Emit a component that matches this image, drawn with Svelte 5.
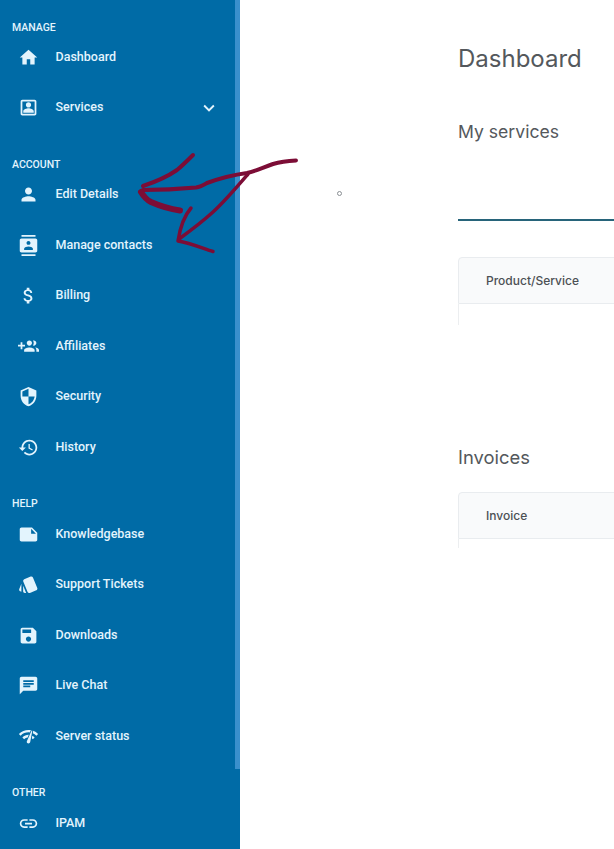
<script>
  const icons = {
    home: 'M10 20v-6h4v6h5v-8h3L12 3 2 12h3v8z',
    services: 'M19 5v14H5V5h14m0-2H5c-1.11 0-2 .9-2 2v14c0 1.1.89 2 2 2h14c1.1 0 2-.9 2-2V5c0-1.1-.9-2-2-2zm-7 9c1.65 0 3-1.35 3-3s-1.35-3-3-3-3 1.35-3 3 1.35 3 3 3zm-6 6h12v-1.53c0-2.5-3.97-3.58-6-3.58s-6 1.08-6 3.58V18z',
    person: 'M12 12c2.21 0 4-1.79 4-4s-1.79-4-4-4-4 1.79-4 4 1.79 4 4 4zm0 2c-2.67 0-8 1.34-8 4v2h16v-2c0-2.66-5.33-4-8-4z',
    contacts: 'M20 0H4v2h16V0zM4 24h16v-2H4v2zM20 4H4c-1.1 0-2 .9-2 2v12c0 1.1.9 2 2 2h16c1.1 0 2-.9 2-2V6c0-1.1-.9-2-2-2zm-8 2.75c1.24 0 2.25 1.01 2.25 2.25s-1.01 2.25-2.25 2.25S9.75 10.24 9.75 9 10.76 6.75 12 6.75zM17 17H7v-1.5c0-1.67 3.33-2.5 5-2.5s5 .83 5 2.5V17z',
    money: 'M11.8 10.9c-2.27-.59-3-1.2-3-2.15 0-1.09 1.01-1.85 2.7-1.85 1.78 0 2.44.85 2.5 2.1h2.21c-.07-1.72-1.12-3.3-3.21-3.81V3h-3v2.16c-1.94.42-3.5 1.68-3.5 3.61 0 2.31 1.91 3.46 4.7 4.13 2.5.6 3 1.48 3 2.41 0 .69-.49 1.79-2.7 1.79-2.06 0-2.87-.92-2.98-2.1h-2.2c.12 2.19 1.76 3.42 3.68 3.83V21h3v-2.15c1.95-.37 3.5-1.5 3.5-3.55 0-2.84-2.43-3.81-4.7-4.4z',
    groupAdd: 'M8 10H5V7H3v3H0v2h3v3h2v-3h3v-2zm10 1c1.66 0 2.99-1.34 2.99-3S19.66 5 18 5c-.32 0-.63.05-.91.14.57.81.9 1.79.9 2.86s-.34 2.04-.9 2.86c.28.09.59.14.91.14zm-5 0c1.66 0 2.99-1.34 2.99-3S14.66 5 13 5s-3 1.34-3 3 1.34 3 3 3zm6.62 2.16c.83.73 1.38 1.66 1.38 2.84v2h3v-2c0-1.54-2.37-2.49-4.38-2.84zM13 13c-2 0-6 1-6 3v2h12v-2c0-2-4-3-6-3z',
    security: 'M12 1L3 5v6c0 5.55 3.84 10.74 9 12 5.16-1.26 9-6.45 9-12V5l-9-4zm0 10.99h7c-.53 4.12-3.28 7.79-7 8.94V12H5V6.3l7-3.11v8.8z',
    history: 'M13 3c-4.97 0-9 4.03-9 9H1l3.89 3.89.07.14L9 12H6c0-3.87 3.13-7 7-7s7 3.13 7 7-3.13 7-7 7c-1.93 0-3.68-.79-4.94-2.06l-1.42 1.42C8.27 19.99 10.51 21 13 21c4.97 0 9-4.03 9-9s-4.03-9-9-9zm-1 5v5l4.28 2.54.72-1.21-3.5-2.08V8H12z',
    note: 'M22 10l-6-6H4c-1.1 0-2 .9-2 2v12.01c0 1.1.9 1.99 2 1.99l16-.01c1.1 0 2-.89 2-1.99v-8zm-7-4.5l5.5 5.5H15V5.5z',
    tickets: 'M2.53 19.65l1.34.56v-9.03l-2.43 5.86c-.41 1.02.08 2.19 1.09 2.61zm19.5-3.7L17.07 3.98c-.31-.75-1.04-1.21-1.81-1.23-.26 0-.53.04-.79.15L7.1 5.95c-.75.31-1.21 1.03-1.23 1.8-.01.27.04.54.15.8l4.96 11.97c.31.76 1.05 1.22 1.83 1.23.26 0 .52-.05.77-.15l7.36-3.05c1.02-.42 1.51-1.59 1.09-2.6zM5.88 19.75c0 1.1.9 2 2 2h1.45l-3.45-8.34v6.34z',
    save: 'M17 3H5c-1.11 0-2 .9-2 2v14c0 1.1.89 2 2 2h14c1.1 0 2-.9 2-2V7l-4-4zm-5 16c-1.66 0-3-1.34-3-3s1.34-3 3-3 3 1.34 3 3-1.34 3-3 3zm3-10H5V5h10v4z',
    chat: 'M20 2H4c-1.1 0-1.99.9-1.99 2L2 22l4-4h14c1.1 0 2-.9 2-2V4c0-1.1-.9-2-2-2zM6 9h12v2H6V9zm8 5H6v-2h8v2zm4-6H6V6h12v2z',
    network: 'M15.9 5c-.17 0-.32.09-.41.23l-.07.15-5.18 11.65c-.16.29-.26.61-.26.96 0 1.11.9 2.01 2.01 2.01.96 0 1.77-.68 1.96-1.59l.01-.03L16.4 5.5c0-.28-.22-.5-.5-.5zM1 9l2 2c2.88-2.88 6.79-4.08 10.53-3.62l1.19-2.68C9.89 3.84 4.74 5.27 1 9zm20 2l2-2c-1.64-1.64-3.55-2.82-5.59-3.57l-.53 2.82c1.5.62 2.9 1.53 4.12 2.75zm-4 4l2-2c-.8-.8-1.7-1.42-2.66-1.89l-.55 2.92c.42.27.83.59 1.21.97zM5 13l2 2c1.13-1.13 2.56-1.79 4.03-2l1.28-2.88c-2.63-.08-5.3.87-7.31 2.88z',
    link: 'M3.9 12c0-1.71 1.39-3.1 3.1-3.1h4V7H7c-2.76 0-5 2.24-5 5s2.24 5 5 5h4v-1.9H7c-1.71 0-3.1-1.39-3.1-3.1zM8 13h8v-2H8v2zm9-6h-4v1.9h4c1.71 0 3.1 1.39 3.1 3.1s-1.39 3.1-3.1 3.1h-4V17h4c2.76 0 5-2.24 5-5s-2.24-5-5-5z',
    expand: 'M16.59 8.59L12 13.17 7.41 8.59 6 10l6 6 6-6z'
  };

  const sections = [
    {
      title: 'MANAGE',
      items: [
        { label: 'Dashboard', icon: 'home' },
        { label: 'Services', icon: 'services', more: true }
      ]
    },
    {
      title: 'ACCOUNT',
      items: [
        { label: 'Edit Details', icon: 'person' },
        { label: 'Manage contacts', icon: 'contacts' },
        { label: 'Billing', icon: 'money' },
        { label: 'Affiliates', icon: 'groupAdd' },
        { label: 'Security', icon: 'security' },
        { label: 'History', icon: 'history' }
      ]
    },
    {
      title: 'HELP',
      items: [
        { label: 'Knowledgebase', icon: 'note' },
        { label: 'Support Tickets', icon: 'tickets' },
        { label: 'Downloads', icon: 'save' },
        { label: 'Live Chat', icon: 'chat' },
        { label: 'Server status', icon: 'network' }
      ]
    },
    {
      title: 'OTHER',
      items: [{ label: 'IPAM', icon: 'link' }]
    }
  ];
</script>

<div class="page">
  <aside class="sidebar">
    {#each sections as section}
      <section class="group">
        <h4>{section.title}</h4>
        <ul>
          {#each section.items as item}
            <li>
              <svg class="icon" viewBox="0 0 24 24"><path d={icons[item.icon]} /></svg>
              <span>{item.label}</span>
              {#if item.more}
                <svg class="chevron" viewBox="0 0 24 24"><path d={icons.expand} /></svg>
              {/if}
            </li>
          {/each}
        </ul>
      </section>
    {/each}
    <div class="scrollbar"></div>
  </aside>

  <main>
    <h1>Dashboard</h1>
    <h2>My services</h2>
    <div class="tabline"></div>
    <div class="table first">
      <div class="thead">Product/Service</div>
      <div class="tbody"></div>
    </div>
    <h2 class="invoices">Invoices</h2>
    <div class="table">
      <div class="thead">Invoice</div>
      <div class="tbody short"></div>
    </div>
  </main>

  <!-- hand drawn annotation on top of the screenshot -->
  <svg class="scribble" viewBox="0 0 614 849">
    <g fill="none" stroke="#7c0d36" stroke-linecap="round" stroke-linejoin="round">
      <path stroke-width="4" d="M296 160.500 C288 161 280 162 273 164 C264 167 256 171 247 173 C232 175 218 179 207 183 C202 186 200 187 196 187.500 C180 189 162 190 143 190" />
      <path stroke-width="4" d="M193 155 C187 161 182 166 177 170 C167 177 155 182 143 186" />
      <path stroke-width="6" d="M141 192 C144 197 147 200 151 202 C160 206 170 209 180 210.500" />
      <path stroke-width="3.500" d="M248 174 C236 188 225 201 213 212 C202 222 190 231 179 239" />
      <path stroke-width="3.500" d="M191 208 C185 215 180 228 178 241 C190 243 202 248 213 251.500" />
    </g>
    <circle cx="339.500" cy="193.500" r="2" fill="#fff" stroke="#8a8f94" stroke-width="1" />
  </svg>
</div>

<style>
  :global(body) {
    margin: 0;
    background: #fff;
  }

  .page {
    position: relative;
    display: flex;
    width: 614px;
    height: 849px;
    overflow: hidden;
    font-family: Inter, "Liberation Sans", sans-serif;
  }

  .sidebar {
    position: relative;
    box-sizing: border-box;
    flex: 0 0 240px;
    height: 849px;
    padding-top: 22px;
    background: #006ba6;
    color: #e3f4fd;
    font-family: Roboto, "Liberation Sans", sans-serif;
  }

  .group {
    margin-bottom: 39px;
  }

  h4 {
    margin: 0 0 12px 12px;
    font-size: 10.500px;
    line-height: 12px;
    font-weight: 500;
  }

  .group:first-child h4 {
    margin-bottom: 11px;
  }

  ul {
    display: flex;
    flex-direction: column;
    gap: 26.500px;
    margin: 0;
    padding: 0 0 0 18px;
    list-style: none;
  }

  li {
    display: flex;
    align-items: center;
    height: 24px;
    font-size: 12.500px;
    font-weight: 500;
  }

  li span {
    margin-bottom: 2px;
  }

  .icon {
    flex: none;
    width: 21px;
    height: 21px;
    margin-right: 16.500px;
    fill: #e3f4fd;
  }

  .chevron {
    width: 22px;
    height: 22px;
    margin-left: auto;
    margin-right: 20px;
    fill: #e3f4fd;
  }

  .scrollbar {
    position: absolute;
    top: 0;
    right: 0;
    width: 5px;
    height: 769px;
    background: #3a90cc;
  }

  main {
    flex: 1;
    min-width: 0;
    padding: 44px 0 0 218px;
    color: #54585c;
  }

  h1 {
    margin: 0;
    font-size: 24px;
    line-height: 29px;
    font-weight: 400;
  }

  h2 {
    margin: 48px 0 0;
    font-size: 17.600px;
    line-height: 22px;
    font-weight: 400;
  }

  .invoices {
    margin-top: 121px;
    font-size: 18.400px;
  }

  .tabline {
    height: 2px;
    margin-top: 76px;
    background: #27647a;
  }

  .table {
    margin-top: 24px;
    margin-right: -10px;
  }

  .table.first {
    margin-top: 36px;
  }

  .thead {
    box-sizing: border-box;
    height: 47px;
    padding-left: 27px;
    border: 1px solid #e9ecef;
    border-radius: 4px 0 0 0;
    background: #f9fafb;
    font-size: 12px;
    line-height: 45px;
    font-weight: 500;
    color: #4c5054;
  }

  .tbody {
    height: 21px;
    border-left: 1px solid #eceef0;
  }

  .tbody.short {
    height: 9px;
  }

  .scribble {
    position: absolute;
    top: 0;
    left: 0;
    width: 614px;
    height: 849px;
    pointer-events: none;
  }
</style>
